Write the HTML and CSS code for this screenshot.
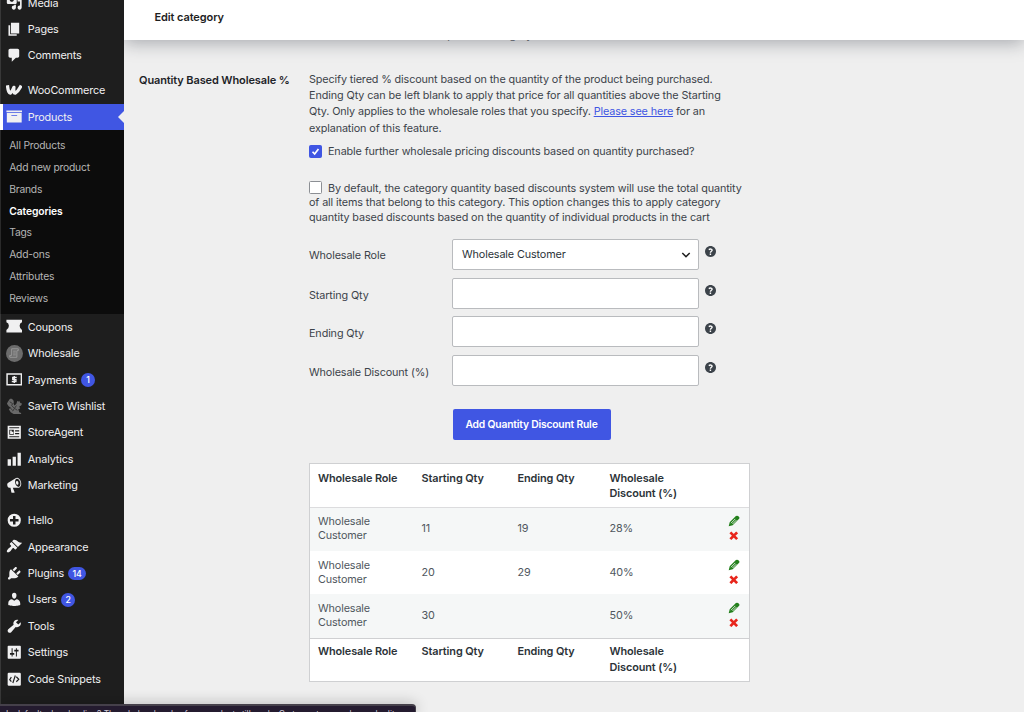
FILE: index.html
```html
<!DOCTYPE html>
<html lang="en">
<head>
<meta charset="utf-8">
<title>Edit category</title>
<link rel="stylesheet" href="styles.css">
</head>
<body>
<div class="app">
<nav class="sidebar">
  <ul class="menu">
    <li class="item"><svg class="icon" viewBox="0 0 20 20"><path d="M13 11V4c0-.55-.45-1-1-1h-1.67L9 1H5L3.67 3H2c-.55 0-1 .45-1 1v7c0 .55.45 1 1 1h10c.55 0 1-.45 1-1zM7 4.5c1.38 0 2.5 1.12 2.5 2.5S8.38 9.5 7 9.5 4.5 8.38 4.5 7 5.62 4.5 7 4.5zM14 6h5v10.5c0 1.38-1.12 2.5-2.5 2.5S14 17.88 14 16.5s1.12-2.5 2.5-2.5c.17 0 .34.02.5.05V9h-3V6zm-4 8.05V13h2v3.5c0 1.38-1.12 2.5-2.5 2.5S7 17.88 7 16.5 8.12 14 9.5 14c.17 0 .34.02.5.05z"/></svg><span>Media</span></li>
    <li class="item"><svg class="icon" viewBox="0 0 20 20"><path d="M6 15V2h10v13H6zm-1 1h8v2H3V5h2v11z"/></svg><span>Pages</span></li>
    <li class="item"><svg class="icon" viewBox="0 0 20 20"><path d="M5 2h9c1.1 0 2 .9 2 2v7c0 1.1-.9 2-2 2h-2l-5 5v-5H5c-1.1 0-2-.9-2-2V4c0-1.1.9-2 2-2z"/></svg><span>Comments</span></li>
    <li class="separator"></li>
    <li class="item"><svg class="icon" viewBox="0 0 20 20"><path d="M2 6Q3 13.800 5.200 13.500Q7.800 11.500 9.600 6.500Q8.800 13.800 11.200 13.500Q14.500 11.500 17.500 6" fill="none" stroke="#f0f0f1" stroke-width="4" stroke-linejoin="round" stroke-linecap="square"/></svg><span>WooCommerce</span></li>
    <li class="item current"><svg class="icon" viewBox="0 0 20 20"><path d="M19.500 3v2H.5V3h19zM1 6h18v11.500H1V6zm12.500 3.500V8.500h-7v1h7z"/></svg><span>Products</span></li>
    <li class="submenu">
      <ul class="submenu-list">
        <li>All Products</li><li>Add new product</li><li>Brands</li><li class="active">Categories</li><li>Tags</li><li>Add-ons</li><li>Attributes</li><li>Reviews</li>
      </ul>
    </li>
    <li class="item"><svg class="icon" viewBox="0 0 20 20"><path d="M0.500 2H19.500V5Q16.500 6 16.500 9.500T19.500 14.500V17.500H0.500V14.500Q3.500 13 3.500 9.500T0.500 5z"/></svg><span>Coupons</span></li>
    <li class="item"><svg class="icon wide" viewBox="0 0 18 18"><circle cx="9" cy="9" r="9" fill="#6c6c6c"/><path d="M6 4h7v2h-1.500v7H4v-2h2zM7.500 6.500h3M7.500 8.500h3M7.500 10.500h3" fill="none" stroke="#9a9a9a"/></svg><span>Wholesale</span></li>
    <li class="item"><svg class="icon" viewBox="0 0 20 20"><path d="M1.300 3.700h17.400v13H1.300z" fill="none" stroke="#f0f0f1" stroke-width="1.800"/><path d="M13 7.700H8.200v2.500h3.800v2.500H7M10 6v8.500" fill="none" stroke="#f0f0f1" stroke-width="1.700"/></svg><span>Payments</span><b class="badge">1</b></li>
    <li class="item"><svg class="icon wide" viewBox="0 0 18 18"><path fill="#696969" d="M4 1c3-1 5 2 4 5l1 2 2-2 1-3 1 1 1-1 1 2 2 1-1 2-2 1 1 2-2 1 1 3 2 1v1H8l-3-2-2-3 2-2-2-1-2-3 1-2z"/><path d="M4 4l3 2-1 2 3 3-2 3M11 8l-2 3 3 2M4 10l3 3" fill="none" stroke="#343434" stroke-width="1"/></svg><span>SaveTo Wishlist</span></li>
    <li class="item"><svg class="icon" viewBox="0 0 20 20"><path fill-rule="evenodd" d="M2 2h16v16H2zM4 4h12v1.300H4zM4 7h5.500v6H4zM11 7.500h5v1.500h-5zM11 11h5v1.500h-5zM4 14.700h12V16H4z"/><path d="M5 8h2v1.500h2V12H5z"/></svg><span>StoreAgent</span></li>
    <li class="item"><svg class="icon" viewBox="0 0 20 20"><path d="M18 18V2h-4v16h4zm-6 0V7H8v11h4zm-6 0v-8H2v8h4z"/></svg><span>Analytics</span></li>
    <li class="item"><svg class="icon" viewBox="0 0 20 20"><path d="M18.150 5.940c.46 1.620.38 3.220-.02 4.480-.42 1.280-1.260 2.180-2.300 2.480-.16.060-.26.060-.4.060-.06.020-.12.020-.18.020-.06.020-.14.020-.22.020h-6.800l2.220 5.500c.02.140-.06.260-.14.340-.08.100-.24.160-.34.160H6.950c-.1 0-.26-.06-.34-.16-.08-.08-.16-.2-.14-.34l-1-5.500H4.250l-.02-.02c-.5.060-1.080-.18-1.540-.62s-.88-1.080-1.060-1.880c-.24-.8-.2-1.560-.02-2.200.18-.62.58-1.080 1.060-1.300l.02-.02 9-5.400c.1-.06.18-.1.240-.16.060-.04.140-.08.240-.12.160-.08.280-.12.500-.18 1.040-.3 2.240.1 3.220.98s1.840 2.240 2.260 3.860zm-2.580 5.980h-.02c.4-.1.740-.34 1.040-.7.580-.7.860-1.760.86-3.040 0-.64-.1-1.300-.28-1.980-.34-1.360-1.020-2.500-1.780-3.240s-1.680-1.100-2.460-.88c-.82.220-1.400.960-1.700 2-.32 1.040-.28 2.360.060 3.720.38 1.360 1 2.500 1.800 3.240.78.740 1.620 1.100 2.480.880zm-2.540-7.080c.22-.04.42-.02.620.04.38.160.760.480 1.020 1s.42 1.200.42 1.780c0 .3-.04.560-.12.800-.18.480-.44.840-.86.940-.34.100-.8-.06-1.140-.4s-.64-.86-.78-1.500c-.18-.62-.12-1.240.02-1.720s.48-.84.820-.94z"/></svg><span>Marketing</span></li>
    <li class="separator"></li>
    <li class="item"><svg class="icon" viewBox="0 0 20 20"><path fill-rule="evenodd" d="M10 2a8 8 0 1 0 0 16a8 8 0 0 0 0-16zM8.500 4.800h3v3.700h3.700v3h-3.700v3.700h-3v-3.700H4.800v-3h3.700z"/></svg><span>Hello</span></li>
    <li class="item"><svg class="icon" viewBox="0 0 20 20"><path d="M14.480 11.060L7.410 3.990l1.500-1.500c.5-.56 2.300-.47 3.510.32 1.210.8 1.430 1.280 2.910 2.100 1.180.64 2.450 1.260 4.450.85zm-.71.710L6.700 4.700 4.930 6.470c-.39.390-.39 1.020 0 1.410l1.060 1.060c.39.390.39 1.030 0 1.420-.6.600-1.430 1.110-2.210 1.690-.35.260-.7.530-1.010.84C1.430 14.230.4 16.080 1.400 17.070c.99 1 2.840-.03 4.180-1.360.31-.31.580-.66.850-1.020.57-.78 1.080-1.610 1.690-2.210.39-.39 1.020-.39 1.410 0l1.060 1.060c.39.390 1.020.390 1.410 0z"/></svg><span>Appearance</span></li>
    <li class="item"><svg class="icon" viewBox="0 0 20 20"><path d="M13.110 4.360L9.870 7.600 8 5.730l3.240-3.240c.35-.34 1.050-.2 1.560.32.520.510.660 1.210.310 1.550zm-8 1.770l.91-1.120 9.010 9.010-1.190.84c-.71.710-2.630 1.160-3.820 1.160H6.140L4.900 17.260c-.59.590-1.540.590-2.120 0-.59-.58-.59-1.530 0-2.120l1.240-1.240v-3.880c0-1.130.4-3.190 1.090-3.890zm7.260 3.970l3.240-3.240c.34-.35 1.040-.21 1.550.31.520.510.660 1.210.310 1.550l-3.240 3.250z"/></svg><span>Plugins</span><b class="badge">14</b></li>
    <li class="item"><svg class="icon" viewBox="0 0 20 20"><path d="M10 9.250c-2.270 0-2.730-3.440-2.730-3.440C7 4.020 7.820 2 9.970 2c2.160 0 2.980 2.020 2.710 3.810 0 0-.41 3.440-2.680 3.440zm0 2.570L12.720 10c2.390 0 4.520 2.330 4.520 4.530v2.490s-3.650 1.130-7.240 1.130c-3.650 0-7.240-1.130-7.240-1.130v-2.490c0-2.250 1.940-4.480 4.470-4.480z"/></svg><span>Users</span><b class="badge">2</b></li>
    <li class="item"><svg class="icon" viewBox="0 0 20 20"><path d="M16.680 9.770c-1.340 1.340-3.300 1.670-4.950.99l-5.410 6.520c-.99.990-2.590.990-3.580 0s-.99-2.590 0-3.570l6.520-5.420c-.68-1.650-.35-3.610.99-4.950 1.280-1.280 3.120-1.620 4.720-1.060l-2.890 2.890 2.820 2.820 2.860-2.870c.53 1.580.18 3.390-1.080 4.650z"/></svg><span>Tools</span></li>
    <li class="item"><svg class="icon" viewBox="0 0 20 20"><path fill-rule="evenodd" d="M18 17V3c0-.55-.45-1-1-1H3c-.55 0-1 .45-1 1v14c0 .55.450 1 1 1h14c.55 0 1-.45 1-1zM8 11h2v2H8v2H6.800v-2H4.800v-2h2V5H8v6zm5.200-2v6H12V9h-2V7h2V5h1.200v2h2v2z"/></svg><span>Settings</span></li>
    <li class="item"><svg class="icon" viewBox="0 0 20 20"><rect x="2" y="2" width="16" height="16" rx="1.500"/><path d="M6.500 7.500L4.500 10.500L6.500 13M12.500 7l3 3-3 3M11.300 5.500L8.300 14.500" fill="none" stroke="#1e1e1e" stroke-width="1.400"/></svg><span>Code Snippets</span></li>
  </ul>
</nav>
<main class="main">
  <header class="header"><h1>Edit category</h1></header>
  <div class="prev-row">Set wholesale discounts for product category</div>
  <section class="field">
    <h2 class="field-title">Quantity Based Wholesale %</h2>
    <div class="field-body">
      <p class="intro">Specify tiered % discount based on the quantity of the product being purchased.<br><span class="loose">Ending Qty can be left blank to apply that price for all quantities above the Starting</span><br>Qty. Only applies to the wholesale roles that you specify. <a href="#">Please see here</a> for an<br>explanation of this feature.</p>
      <label class="check"><span class="box on"><svg viewBox="0 0 13 13"><path d="M3 6.800l2.500 2.700L10 3.500"/></svg></span>Enable further wholesale pricing discounts based on quantity purchased?</label>
      <label class="check second"><span class="box"></span>By default, the category quantity based discounts system will use the total quantity<br>of all items that belong to this category. This option changes this to apply category<br>quantity based discounts based on the quantity of individual products in the cart</label>
      <div class="form">
        <div class="form-row"><span class="label">Wholesale Role</span><div class="input select">Wholesale Customer<svg class="chevron" viewBox="0 0 10 10"><path d="M1.300 3L5 6.700 8.700 3"/></svg></div><svg class="help" viewBox="3 3 14 14"><path d="M17 10c0-3.870-3.140-7-7-7-3.870 0-7 3.130-7 7s3.130 7 7 7c3.860 0 7-3.130 7-7z"/><path class="q" d="M7.800 7.700C9.500 6.500 12.100 6.700 12 8.300C12 9.700 9.900 9.600 9.900 11.500M9.900 12.700v1.700"/></svg></div>
        <div class="form-row"><span class="label low">Starting Qty</span><div class="input"></div><svg class="help" viewBox="3 3 14 14"><path d="M17 10c0-3.870-3.140-7-7-7-3.870 0-7 3.130-7 7s3.130 7 7 7c3.860 0 7-3.130 7-7z"/><path class="q" d="M7.800 7.700C9.500 6.500 12.100 6.700 12 8.300C12 9.700 9.900 9.600 9.900 11.500M9.900 12.700v1.700"/></svg></div>
        <div class="form-row"><span class="label low">Ending Qty</span><div class="input"></div><svg class="help" viewBox="3 3 14 14"><path d="M17 10c0-3.870-3.140-7-7-7-3.870 0-7 3.130-7 7s3.130 7 7 7c3.860 0 7-3.130 7-7z"/><path class="q" d="M7.800 7.700C9.500 6.500 12.100 6.700 12 8.300C12 9.700 9.900 9.600 9.900 11.500M9.900 12.700v1.700"/></svg></div>
        <div class="form-row"><span class="label low">Wholesale Discount (%)</span><div class="input"></div><svg class="help" viewBox="3 3 14 14"><path d="M17 10c0-3.870-3.140-7-7-7-3.870 0-7 3.130-7 7s3.130 7 7 7c3.860 0 7-3.130 7-7z"/><path class="q" d="M7.800 7.700C9.500 6.500 12.100 6.700 12 8.300C12 9.700 9.900 9.600 9.900 11.500M9.900 12.700v1.700"/></svg></div>
        <button class="add">Add Quantity Discount Rule</button>
      </div>
      <div class="rules">
        <div class="row head"><span>Wholesale Role</span><span>Starting Qty</span><span>Ending Qty</span><span>Wholesale<br>Discount (%)</span></div>
        <div class="row odd"><span>Wholesale<br>Customer</span><span>11</span><span>19</span><span>28%</span><span class="actions"><svg class="pencil" viewBox="0 0 12 12"><path d="M.7 11.300L1.700 7.300 7.900 1.100Q9.300.2 10.700 1.400T10.900 4.100L4.700 10.300z"/><path class="hole" d="M3 8.200L7.300 3.900M4.500 9L8.300 5.200"/></svg><svg class="cross" viewBox="0 0 9 9"><path d="M1.300 1.300l6.400 6.400M7.700 1.300L1.300 7.700"/></svg></span></div>
        <div class="row"><span>Wholesale<br>Customer</span><span>20</span><span>29</span><span>40%</span><span class="actions"><svg class="pencil" viewBox="0 0 12 12"><path d="M.7 11.300L1.700 7.300 7.900 1.100Q9.300.2 10.700 1.400T10.900 4.100L4.700 10.300z"/><path class="hole" d="M3 8.200L7.300 3.900M4.500 9L8.300 5.200"/></svg><svg class="cross" viewBox="0 0 9 9"><path d="M1.300 1.300l6.400 6.400M7.700 1.300L1.300 7.700"/></svg></span></div>
        <div class="row odd"><span>Wholesale<br>Customer</span><span>30</span><span></span><span>50%</span><span class="actions"><svg class="pencil" viewBox="0 0 12 12"><path d="M.7 11.300L1.700 7.300 7.900 1.100Q9.300.2 10.700 1.400T10.900 4.100L4.700 10.300z"/><path class="hole" d="M3 8.200L7.300 3.900M4.500 9L8.300 5.200"/></svg><svg class="cross" viewBox="0 0 9 9"><path d="M1.300 1.300l6.400 6.400M7.700 1.300L1.300 7.700"/></svg></span></div>
        <div class="row head foot"><span>Wholesale Role</span><span>Starting Qty</span><span>Ending Qty</span><span>Wholesale<br>Discount (%)</span></div>
      </div>
    </div>
  </section>
</main>
<div class="status">Is default when loading? The wholesale rules for a product still apply. Go to customer roles and edit</div>
</div>
</body>
</html>
```
FILE: styles.css
```css
* { box-sizing: border-box; }
html, body { margin: 0; height: 712px; overflow: hidden; }
body { font-family: Inter, "Liberation Sans", sans-serif; font-size: 10.800px; letter-spacing: -.118px; color: #3c434a; background: #efefef; }
h1, h2, p, ul { margin: 0; padding: 0; }
ul { list-style: none; }
.app { position: relative; display: flex; height: 712px; overflow: hidden; }

.sidebar { width: 123.500px; flex: none; height: 712px; overflow: hidden; background: #1e1e1e; box-shadow: inset 1px 0 #383838; }
.menu { margin-top: -10.200px; }
.item { display: flex; align-items: center; height: 26.450px; padding-left: 5.500px; color: #f0f0f1; font-size: 10.800px; letter-spacing: -.15px; white-space: nowrap; }
.icon { width: 16.500px; height: 16.500px; margin: -1px 5.800px 0 0; fill: #f0f0f1; flex: none; }
.icon.wide { width: 17px; height: 17px; margin-right: 5.300px; }
.separator { height: 8.400px; }
.current { position: relative; background: #4056e3; border-left: 3px solid #fff; padding-left: 2.500px; }
.current::after { content: ""; position: absolute; right: 0; top: 7px; border: 6px solid transparent; border-right-color: #efefef; border-left: 0; }
.badge { margin-left: 4.500px; min-width: 13.500px; height: 13.500px; padding: 0 4px; border-radius: 7px; background: #4056e3; font-size: 8.800px; line-height: 13.500px; font-weight: 500; text-align: center; color: #fff; }
.submenu { height: 183.600px; padding: 5px 0 0 9.200px; background: #0c0c0c; box-shadow: inset 1px 0 #2a2a2a; }
.submenu-list li { height: 21.750px; line-height: 21.750px; font-size: 10.300px; letter-spacing: -.2px; color: #b5b5b5; white-space: nowrap; }
.submenu-list .active { color: #fff; font-weight: 600; letter-spacing: -.1px; }

.main { flex: 1; min-width: 0; }
.header { position: relative; z-index: 1; height: 40px; padding-left: 31px; background: #fff; box-shadow: 0 3px 18px rgba(30, 35, 50, .35); clip-path: inset(0 0 -40px 0); }
.header h1 { font-size: 11px; letter-spacing: -.1px; line-height: 34.500px; font-weight: 600; color: #1e1e1e; }
.prev-row { margin: -12px 0 0 185.500px; height: 16px; line-height: 16px; letter-spacing: -.2px; white-space: nowrap; color: #6b7075; }
.field { display: grid; grid-template-columns: 170px 1fr; padding: 28px 0 0 15.500px; }
.field-title { font-size: 11px; letter-spacing: -.12px; line-height: 16px; font-weight: 600; color: #1d2327; white-space: nowrap; }
.intro { line-height: 16.200px; white-space: nowrap; }
.loose { letter-spacing: -.095px; }
.intro a { color: #4056e3; text-decoration: underline; }
.check { display: block; margin-top: 7.200px; line-height: 16px; white-space: nowrap; }
.check.second { margin-top: 21px; line-height: 14.300px; }
.box { display: inline-block; vertical-align: -2px; width: 13px; height: 13px; margin-right: 6px; border: 1px solid #8c8f94; border-radius: 1.500px; background: #fff; line-height: 0; }
.box.on { border-color: #4056e3; background: #4056e3; }
.box svg { width: 11px; height: 11px; fill: none; stroke: #fff; stroke-width: 2; }
.form { margin-top: 14.200px; }
.form-row { display: grid; grid-template-columns: 143px 247px 12px; height: 38.700px; }
.label { line-height: 33px; white-space: nowrap; }
.label.low { line-height: 35px; }
.input { height: 31px; border: 1px solid #b9bbbe; border-radius: 2px; background: #fff; color: #2c3338; line-height: 29px; padding: 0 8px 0 9px; }
.select { display: flex; justify-content: space-between; align-items: center; }
.chevron { width: 10px; height: 10px; margin-right: -1px; fill: none; stroke: #1e1e1e; stroke-width: 1.500; }
.help { width: 11px; height: 11px; margin: 6.800px 0 0 6.200px; fill: #3c434a; }
.help .q { fill: none; stroke: #fff; stroke-width: 1.800; }
.add { display: block; margin: 15.400px 0 0 143.500px; width: 158px; height: 31px; padding: 0 0 1px; border: 0; border-radius: 2px; background: #4056e3; color: #fff; font: 600 10.300px Inter, sans-serif; letter-spacing: -.18px; white-space: nowrap; }
.rules { width: 441px; margin-top: 23px; border: 1px solid #cfd0d2; background: #fff; }
.row { display: grid; grid-template-columns: 103.500px 96px 92px 100px 1fr; align-items: center; height: 43.300px; padding-left: 8px; line-height: 14px; color: #50575e; white-space: nowrap; }
.row.odd { background: #f5f7f7; }
.row.head { align-items: start; height: 43.400px; padding-top: 7px; line-height: 15px; font-size: 10.900px; letter-spacing: -.1px; font-weight: 600; color: #2c3338; border-bottom: 1px solid #dcdcde; }
.row.foot { border-bottom: 0; border-top: 1px solid #cfd0d2; height: 43px; padding-top: 5.800px; line-height: 15.300px; }
.actions { display: flex; flex-direction: column; align-items: center; gap: 4px; padding: 0 0 2.500px 9px; }
.pencil { width: 12px; height: 12px; fill: #23801c; }
.hole { fill: none; stroke: #eaf3ea; stroke-width: .9; }
.cross { width: 9.500px; height: 9.500px; stroke: #e8261c; stroke-width: 2.600; }
.status { position: absolute; left: 0; bottom: 0; width: 416px; height: 8px; padding: 2px 6px 0; overflow: hidden; white-space: nowrap; font-size: 8.300px; letter-spacing: 0; line-height: 13px; color: #cfc9d6; background: #241b2f; border-top: 2px solid #45404a; border-right: 1px solid #45404a; border-top-right-radius: 4px; box-shadow: 0 0 14px rgba(0, 0, 0, .3); }
```
